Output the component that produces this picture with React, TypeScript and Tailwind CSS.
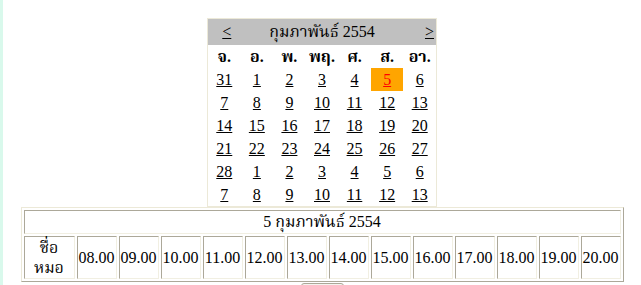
import React from "react";

const weekdays = ["จ.", "อ.", "พ.", "พฤ.", "ศ.", "ส.", "อา."];

const weeks: number[][] = [
  [31, 1, 2, 3, 4, 5, 6],
  [7, 8, 9, 10, 11, 12, 13],
  [14, 15, 16, 17, 18, 19, 20],
  [21, 22, 23, 24, 25, 26, 27],
  [28, 1, 2, 3, 4, 5, 6],
  [7, 8, 9, 10, 11, 12, 13],
];

const hours = [
  "08.00", "09.00", "10.00", "11.00", "12.00", "13.00", "14.00",
  "15.00", "16.00", "17.00", "18.00", "19.00", "20.00",
];

const inset =
  "border border-t-[#aca899] border-l-[#aca899] border-b-[#f1efe2] border-r-[#f1efe2]";

function Calendar() {
  return (
    <div className="w-[230px] border border-[#ece9d8] bg-white">
      <div className="grid grid-cols-7 h-[26px] items-center bg-[#c0c0c0]">
        <a className="text-center pl-[5px] underline text-black cursor-pointer">&lt;</a>
        <div className="col-span-5 text-center">กุมภาพันธ์ 2554</div>
        <a className="text-right pr-[2px] underline text-black cursor-pointer">&gt;</a>
      </div>
      <div className="grid grid-cols-7 h-[23px] items-center font-bold">
        {weekdays.map((d) => (
          <div key={d} className="text-center">
            {d}
          </div>
        ))}
      </div>
      {weeks.map((week, wi) => (
        <div key={wi} className="grid grid-cols-7">
          {week.map((day, di) => {
            const selected = wi === 0 && di === 5;
            return (
              <div
                key={di}
                className={`h-[23px] flex items-center justify-center ${
                  selected ? "bg-[#ffa500]" : ""
                }`}
              >
                <a
                  className={`underline cursor-pointer ${
                    selected ? "text-[#ff0000]" : "text-black"
                  }`}
                >
                  {day}
                </a>
              </div>
            );
          })}
        </div>
      ))}
    </div>
  );
}

function Schedule() {
  return (
    <div className="w-[603px] border border-t-[#ece9d8] border-l-[#ece9d8] border-b-[#aca899] border-r-[#aca899] p-[2px] flex flex-col gap-[2px] bg-white">
      <div className={`${inset} h-[24px] flex items-center justify-center`}>
        5 กุมภาพันธ์ 2554
      </div>
      <div className="flex gap-[2px] h-[43px]">
        <div
          className={`${inset} w-[51px] flex flex-col items-center justify-center leading-[20px]`}
        >
          <span>ชื่อ</span>
          <span>หมอ</span>
        </div>
        {hours.map((h) => (
          <div
            key={h}
            className={`${inset} w-[40px] flex items-center justify-center`}
          >
            {h}
          </div>
        ))}
      </div>
    </div>
  );
}

export default function App() {
  return (
    <div
      className="h-[285px] w-[641px] overflow-hidden flex bg-white text-[16px] text-black"
      style={{
        fontFamily:
          '"Liberation Serif", "Noto Serif Thai", "Noto Sans Thai", Tahoma, serif',
      }}
    >
      <div className="w-[3px] shrink-0 bg-[#d9f9ec]" />
      <div className="flex-1 flex flex-col items-center pt-[18px]">
        <Calendar />
        <Schedule />
        <button className="mt-[1px] w-[43px] h-[22px] shrink-0 rounded-[3px] border border-[#aca899] bg-[#f4f3ee]" />
      </div>
    </div>
  );
}
